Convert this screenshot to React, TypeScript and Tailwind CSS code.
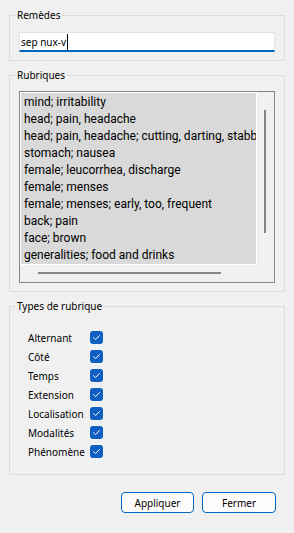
import React from "react";

const rubriques = [
  "mind; irritability",
  "head; pain, headache",
  "head; pain, headache; cutting, darting, stabbing",
  "stomach; nausea",
  "female; leucorrhea, discharge",
  "female; menses",
  "female; menses; early, too, frequent",
  "back; pain",
  "face; brown",
  "generalities; food and drinks",
];

const types = ["Alternant", "Côté", "Temps", "Extension", "Localisation", "Modalités", "Phénomène"];

const uiFont = "font-['Noto_Sans',sans-serif] text-[10px]";

function Check() {
  return (
    <div className="w-[13px] h-[13px] rounded-[3px] bg-[#0f5fc2] flex items-center justify-center">
      <svg width="13" height="13" viewBox="0 0 13 13" fill="none">
        <path d="M3.6 6.7 L5.6 8.6 L9.4 4.6" stroke="white" strokeWidth="1" strokeLinecap="round" strokeLinejoin="round" />
      </svg>
    </div>
  );
}

export default function App() {
  return (
    <div className={`w-[294px] h-[533px] bg-[#f0f0f0] px-[9px] pt-[7px] flex flex-col text-black ${uiFont}`}>
      <fieldset className="border border-[#dcdcdc] px-[9px] pt-[9px] pb-[8px]">
        <legend className="-ml-[3px] px-[1px] leading-[16px]">Remèdes</legend>
        <div className="h-[20px] bg-white border border-[#e3e3e3] border-b-2 border-b-[#0067c0] flex items-center pl-[1px]">
          <span className="leading-[16px]">sep nux-v</span>
          <span className="ml-[1px] w-px h-[16px] bg-black" />
        </div>
      </fieldset>

      <fieldset className="mt-[6px] border border-[#dcdcdc] px-[9px] pt-[8px] pb-[8px]">
        <legend className="-ml-[3px] px-[1px] leading-[16px]">Rubriques</legend>
        <div className="h-[192px] border border-[#82878f] grid grid-cols-[1fr_17px] grid-rows-[1fr_17px]">
          <div className="border border-white border-l-white bg-[#d9d9d9] overflow-hidden pl-[3px] pt-px font-['Roboto',sans-serif] text-[12px] leading-[17px] whitespace-nowrap">
            {rubriques.map((r, i) => (
              <div key={i} className="h-[17px]">
                {r}
              </div>
            ))}
          </div>
          <div className="relative">
            <div className="absolute left-[7px] top-[18px] w-[2px] h-[123px] bg-[#858585]" />
          </div>
          <div className="relative">
            <div className="absolute left-[18px] top-[7px] h-[2px] w-[183px] bg-[#858585]" />
          </div>
          <div />
        </div>
      </fieldset>

      <fieldset className="mt-[6px] border border-[#dcdcdc] pl-[18px] pr-[9px] pt-[14px] pb-[13px]">
        <legend className="-ml-[12px] px-[1px] leading-[16px]">Types de rubrique</legend>
        <div className="grid grid-cols-[62px_13px] auto-rows-[19px] items-center">
          {types.map((t) => (
            <React.Fragment key={t}>
              <span className="leading-[16px]">{t}</span>
              <Check />
            </React.Fragment>
          ))}
        </div>
      </fieldset>

      <div className="mt-[17px] flex justify-end gap-[8px] pr-[9px]">
        <button className="w-[73px] h-[21px] bg-[#fdfdfd] border border-[#0067c0] rounded-[4px] leading-[16px]">
          Appliquer
        </button>
        <button className="w-[74px] h-[21px] bg-[#fdfdfd] border border-[#0067c0] rounded-[4px] leading-[16px]">
          Fermer
        </button>
      </div>
    </div>
  );
}
